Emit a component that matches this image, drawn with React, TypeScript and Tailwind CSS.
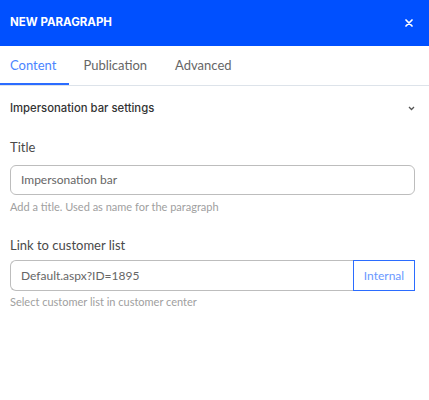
import React from "react";

export default function App() {
  return (
    <div className="w-[429px] h-[400px] bg-white overflow-hidden" style={{ fontFamily: "Lato, 'Noto Sans', sans-serif" }}>
      <div className="h-[46px] bg-[#0050ff] flex items-center justify-between pl-[10px] pr-[16px]">
        <span className="text-white text-[11.5px] font-bold" style={{ fontFamily: "Inter, sans-serif" }}>NEW PARAGRAPH</span>
        <svg width="8" height="8" viewBox="0 0 8 8">
          <path d="M1 1L7 7M7 1L1 7" stroke="white" strokeWidth="1.7" strokeLinecap="round" />
        </svg>
      </div>
      <div className="flex h-[40px] border-b border-[#dde3ea]">
        <div className="relative flex items-center pl-[10px] pr-[13px] text-[13px] text-[#4a85ff]">
          Content
          <div className="absolute left-0 right-0 bottom-0 h-[2px] bg-[#2b6cff]" />
        </div>
        <div className="flex items-center px-[14px] text-[13px] text-[#666]">Publication</div>
        <div className="flex items-center px-[14px] text-[13px] text-[#666]">Advanced</div>
      </div>
      <div className="px-[10px] pr-[14px]">
        <div className="h-[44px] flex items-center justify-between">
          <span className="text-[11.3px] font-medium text-[#333]" style={{ fontFamily: "Inter, sans-serif" }}>Impersonation bar settings</span>
          <svg width="7" height="5" viewBox="0 0 7 5">
            <path d="M1 1L3.5 3.5L6 1" stroke="#555" strokeWidth="1.3" fill="none" />
          </svg>
        </div>
      </div>
      <div className="px-[10px] pr-[14px]">
        <div className="mt-[8px] text-[13px] text-[#4a4a4a] leading-[18px]">Title</div>
        <div className="mt-[9px] h-[30px] rounded-[6px] border border-[#bdbdbd] flex items-center pl-[10px] text-[12px] text-[#666]">
          Impersonation bar
        </div>
        <div className="mt-[5px] text-[11px] text-[#a0a0a0] leading-[14px]">Add a title. Used as name for the paragraph</div>
        <div className="mt-[22px] text-[13px] text-[#4a4a4a] leading-[18px]">Link to customer list</div>
        <div className="mt-[6px] h-[31px] flex">
          <div className="flex-1 rounded-l-[6px] border border-r-0 border-[#bdbdbd] flex items-center pl-[10px] text-[12px] text-[#666]">
            Default.aspx?ID=1895
          </div>
          <div className="w-[62px] border border-[#2b6cff] flex items-center justify-center text-[12px] text-[#6a98ff]">
            Internal
          </div>
        </div>
        <div className="mt-[4px] text-[11px] text-[#a0a0a0] leading-[14px]">Select customer list in customer center</div>
      </div>
    </div>
  );
}
